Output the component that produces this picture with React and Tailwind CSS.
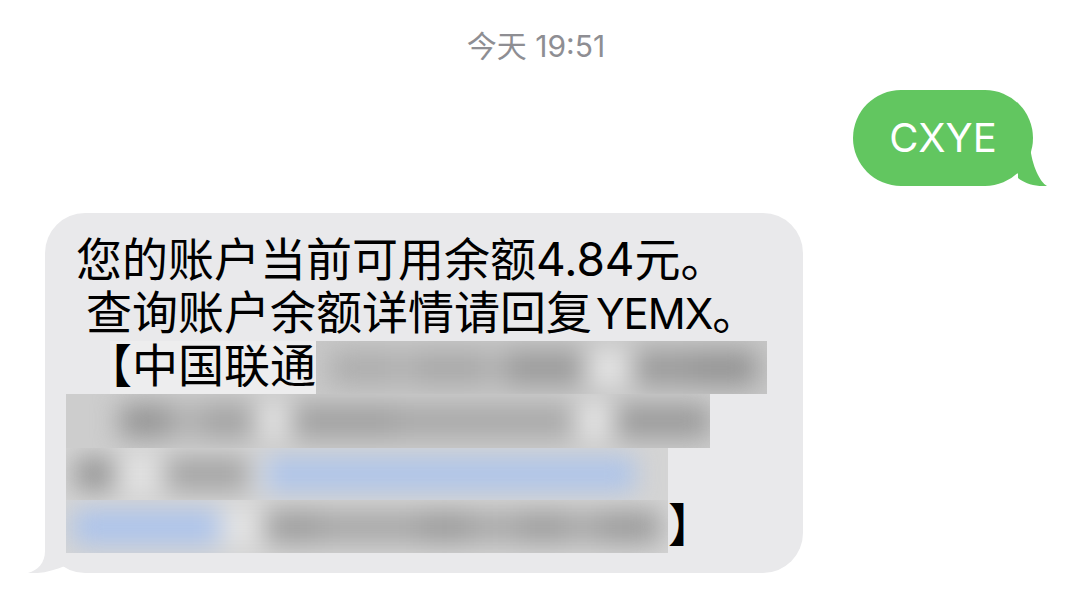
import React from "react";

const font = { fontFamily: '"Inter", "Noto Sans CJK SC", sans-serif' };

const blurRows = {
  row3: [
    "w-[14px] bg-transparent",
    "w-[70px] bg-[#adadad]",
    "w-[10px] bg-[#bdbdbd]",
    "w-[77px] bg-[#a8a8a8]",
    "w-[18px] bg-[#b8b8b8]",
    "w-[80px] bg-[#9a9a9a]",
    "w-[48px] bg-[#e4e4e4]",
    "w-[60px] bg-[#9a9a9a]",
    "w-[64px] bg-[#939393]",
  ],
  row4: [
    "w-[54px] bg-transparent",
    "w-[50px] bg-[#959595]",
    "w-[33px] bg-[#b2b2b2]",
    "w-[52px] bg-[#a2a2a2]",
    "w-[37px] bg-[#e2e2e2]",
    "w-[103px] bg-[#a0a0a0]",
    "w-[180px] bg-[#a8a8a8]",
    "w-[40px] bg-[#e4e4e4]",
    "w-[95px] bg-[#9a9a9a]",
  ],
  row5: [
    "w-[9px] bg-transparent",
    "w-[40px] bg-[#979797]",
    "w-[50px] bg-[#e2e2e2]",
    "w-[85px] bg-[#a4a4a4]",
    "w-[15px] bg-[#e2e2e2]",
    "w-[370px] bg-[#adc4ea]",
  ],
  row6: [
    "w-[7px] bg-transparent",
    "w-[147px] bg-[#abc3ec]",
    "w-[45px] bg-[#e4e4e4]",
    "w-[55px] bg-[#9e9e9e]",
    "w-[100px] bg-[#a8a8a8]",
    "w-[50px] bg-[#9c9c9c]",
    "w-[50px] bg-[#aaaaaa]",
    "w-[45px] bg-[#9e9e9e]",
    "w-[35px] bg-[#aaaaaa]",
    "w-[60px] bg-[#9c9c9c]",
  ],
};

const Blurred = ({ segs, className }) => (
  <div className={`h-full overflow-hidden ${className}`}>
    <div className="flex h-full items-center blur-[13px]">
      {segs.map((c, i) => (
        <div key={i} className={`h-[34px] shrink-0 ${c}`} />
      ))}
    </div>
  </div>
);

export default function App() {
  return (
    <div className="w-full h-[589px] bg-white overflow-hidden flex flex-col" style={font}>
      {/* time */}
      <div className="flex justify-center pl-[7px] pt-[28px] h-[63px]">
        <span className="text-[30px] leading-[36px] text-[#8e8e93]">今天 19:51</span>
      </div>

      {/* sent bubble */}
      <div className="flex justify-end pr-[32px] mt-[27px]">
        <div className="relative w-[180px] h-[96px] rounded-full bg-[#62c660] flex items-center justify-center">
          <span className="relative z-10 text-white text-[40px] leading-none">CXYE</span>
          <svg className="absolute right-[-17px] bottom-0" width="40" height="40" viewBox="0 0 40 40">
            <path d="M8 0 L20 0 C22 20 30 36 37 40 C25 41 14 37 8 32 Z" fill="#62c660" />
          </svg>
        </div>
      </div>

      {/* received bubble */}
      <div className="pl-[45px] mt-[27px]">
        <div className="relative w-[758px] h-[360px] rounded-[40px] bg-[#e9e9eb] pl-[21px] pt-[22px] text-[46px] leading-[53px] text-black">
          <svg className="absolute left-[-20px] bottom-0" width="45" height="48" viewBox="0 0 45 48">
            <path d="M20 0 L20 26 C20 38 13 45 3 48 C15 49 28 46 40 41 L40 0 Z" fill="#e9e9eb" />
          </svg>
          <div className="relative h-[53px] pl-[10px] whitespace-nowrap -translate-y-[2px]">您的账户当前可用余额4.84元。</div>
          <div className="relative h-[53px] pl-[20px] whitespace-nowrap -translate-y-[2px]">
            查询账户余额详情请回复<span className="text-[42px] tracking-[-1px] pl-[4px]">YEMX</span>。
          </div>
          <div className="relative flex h-[53px]">
            <span className="w-[250px] shrink-0 pl-[20px] whitespace-nowrap bg-[linear-gradient(to_right,transparent_44px,#ededee_44px)]">
              <span className="inline-block -translate-y-[2px]">【中国联通</span>
            </span>
            <Blurred segs={blurRows.row3} className="w-[451px] bg-[#c8c8c8]" />
          </div>
          <div className="relative h-[54px]">
            <Blurred segs={blurRows.row4} className="w-[644px] bg-[#cdcdcd]" />
          </div>
          <div className="relative h-[52px]">
            <Blurred segs={blurRows.row5} className="w-[602px] bg-[#d4d4d4]" />
          </div>
          <div className="relative flex h-[53px]">
            <Blurred segs={blurRows.row6} className="w-[602px] bg-[#d5d5d5]" />
            <span className="whitespace-nowrap -translate-y-[2px]">】</span>
          </div>
        </div>
      </div>
    </div>
  );
}
